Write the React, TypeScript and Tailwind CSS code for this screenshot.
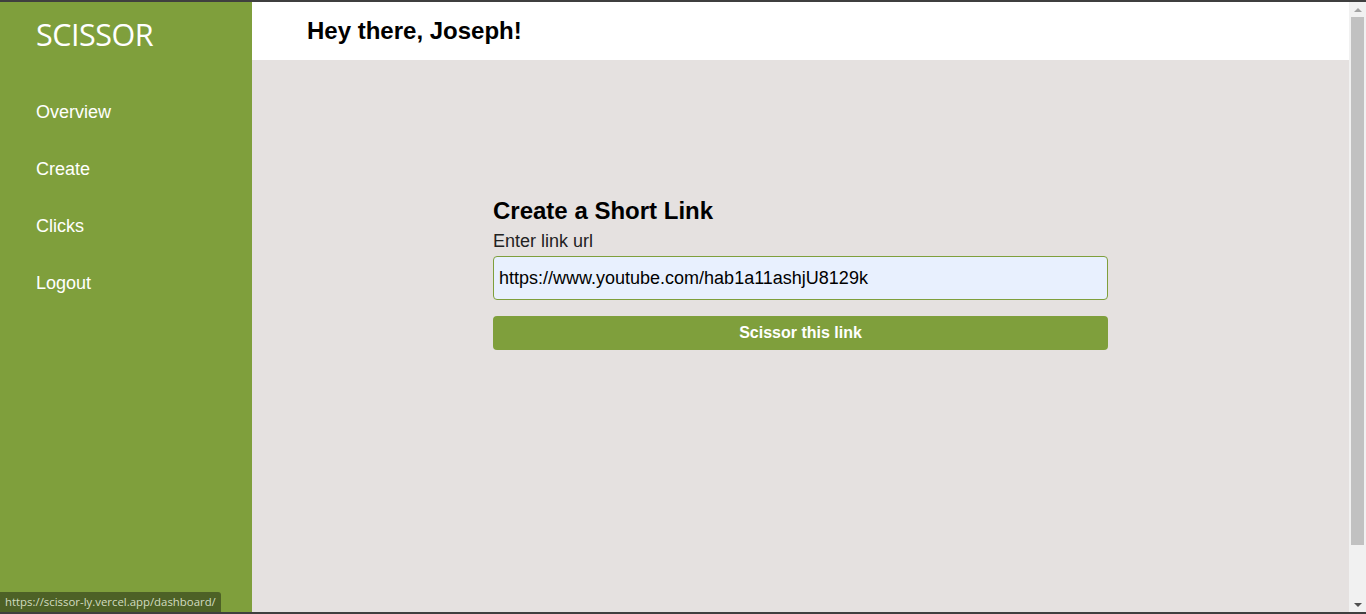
import React, { useState } from "react";

function Sidebar() {
  const links = ["Overview", "Create", "Clicks", "Logout"];
  return (
    <aside className="w-[252px] shrink-0 bg-[#7f9f3c] text-white">
      <div className="pl-[36px] pt-[13px] text-[30.5px] leading-[38px] font-['Open_Sans',sans-serif] tracking-[-0.5px]">
        SCISSOR
      </div>
      <nav className="mt-[48px] flex flex-col gap-[35px] pl-[36px] font-['Liberation_Sans',Arial,sans-serif] text-[18px] leading-[22px]">
        {links.map((l) => (
          <a key={l} href="#" className="block">
            {l}
          </a>
        ))}
      </nav>
    </aside>
  );
}

function App() {
  const [url, setUrl] = useState("https://www.youtube.com/hab1a11ashjU8129k");

  return (
    <div className="relative flex h-[614px] flex-col overflow-hidden border-y-2 border-[#3f3f3f] font-['Liberation_Sans',Arial,sans-serif]">
      <div className="flex flex-1">
        <Sidebar />

        <main className="flex flex-1 flex-col bg-[#e5e1e0]">
          <header className="flex h-[58px] items-center bg-white pl-[55px]">
            <h2 className="text-[24px] font-bold text-black">Hey there, Joseph!</h2>
          </header>

          <div className="flex justify-center pt-[137px]">
            <form className="w-[615px]" onSubmit={(ev) => ev.preventDefault()}>
              <h1 className="text-[24px] leading-[28px] font-bold text-black">Create a Short Link</h1>
              <label className="mt-[5px] block text-[18px] leading-[22px] text-[#222]">Enter link url</label>
              <input
                type="text"
                value={url}
                onChange={(ev) => setUrl(ev.target.value)}
                className="mt-[4px] block h-[44px] w-full rounded-[4px] border border-[#7f9f3c] bg-[#e8f0fe] px-[5px] text-[18px] text-black outline-none"
              />
              <button
                type="submit"
                className="mt-[16px] h-[34px] w-full rounded-[4px] bg-[#7f9f3c] text-[16px] font-bold text-white"
              >
                Scissor this link
              </button>
            </form>
          </div>
        </main>

        {/* fake scrollbar */}
        <div className="flex w-[17px] shrink-0 flex-col bg-[#f1f1f1]">
          <div className="flex h-[15px] items-center justify-center">
            <div className="h-0 w-0 border-x-[4px] border-b-[4px] border-x-transparent border-b-[#a3a3a3]" />
          </div>
          <div className="mx-[2px] h-[528px] bg-[#c1c1c1]" />
          <div className="flex flex-1 items-end justify-center pb-[5px]">
            <div className="h-0 w-0 border-x-[4px] border-t-[4px] border-x-transparent border-t-[#505050]" />
          </div>
        </div>
      </div>

      <div className="absolute bottom-0 left-0 rounded-tr-[3px] bg-[#4d6126] px-[5px] py-[2px] font-['Open_Sans',sans-serif] text-[11.4px] leading-[16px] text-[#d2dcc0]">
        https://scissor-ly.vercel.app/dashboard/
      </div>
    </div>
  );
}

export default App;
